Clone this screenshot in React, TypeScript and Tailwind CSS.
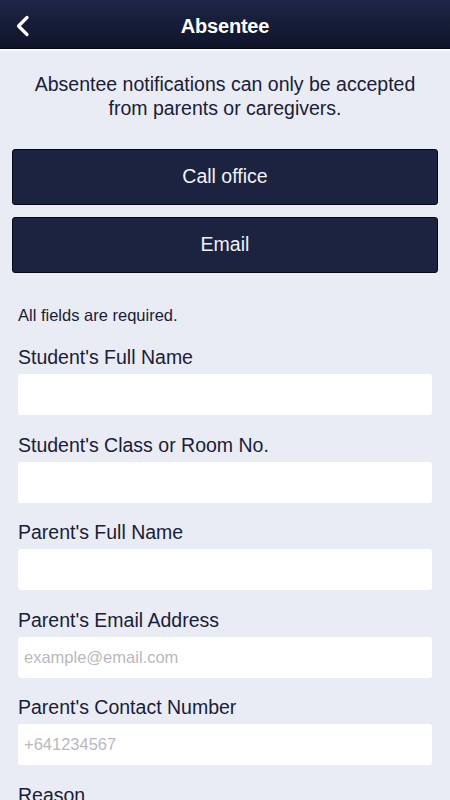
import React from "react";

const fields = [
  { label: "Student's Full Name", placeholder: "" },
  { label: "Student's Class or Room No.", placeholder: "" },
  { label: "Parent's Full Name", placeholder: "" },
  { label: "Parent's Email Address", placeholder: "example@email.com" },
  { label: "Parent's Contact Number", placeholder: "+641234567" },
  { label: "Reason", placeholder: "" },
];

export default function App() {
  return (
    <div
      className="w-[450px] h-[800px] overflow-hidden bg-[#e9ecf4] text-[#1a2038]"
      style={{ fontFamily: '"Liberation Sans", Arial, sans-serif' }}
    >
      <div className="h-[49px] pt-[3px] bg-gradient-to-b from-[#1d2647] to-[#0f1428] border-b border-[#080b16] flex items-center justify-center relative">
        <svg
          className="absolute left-[15px] top-[15px]"
          width="16"
          height="22"
          viewBox="0 0 16 22"
          fill="none"
        >
          <path d="M12 2.5 L3.5 11 L12 19.5" stroke="white" strokeWidth="3.2" strokeLinecap="round" strokeLinejoin="round" />
        </svg>
        <span className="text-white text-[20px] font-bold tracking-[-0.2px]">Absentee</span>
      </div>
      <div className="h-[2px] bg-[#f8f9fc]" />
      <div className="pt-[21px] px-[12px]">
        <p className="text-center text-[19.5px] leading-[24px] px-[16px]">
          Absentee notifications can only be accepted from parents or caregivers.
        </p>
        <button className="mt-[29px] w-full h-[56px] bg-[#1b2340] border border-[#070a14] rounded-[3px] text-[#f1f2f6] text-[19.5px]">
          Call office
        </button>
        <button className="mt-[12px] w-full h-[56px] bg-[#1b2340] border border-[#070a14] rounded-[3px] text-[#f1f2f6] text-[19.5px]">
          Email
        </button>
      </div>
      <div className="px-[18px]">
        <p className="mt-[32px] text-[16.5px] leading-[20px]">All fields are required.</p>
        {fields.map((f, i) => (
          <div key={i} className={i === 0 ? "mt-[21px]" : "mt-[18.5px]"}>
            <div className="text-[19.5px] leading-[22px]">{f.label}</div>
            <div className="mt-[6px] h-[41px] bg-white rounded-[3px] flex items-center px-[6px] text-[16.5px] text-[#b9b9bd]">
              {f.placeholder}
            </div>
          </div>
        ))}
      </div>
    </div>
  );
}
